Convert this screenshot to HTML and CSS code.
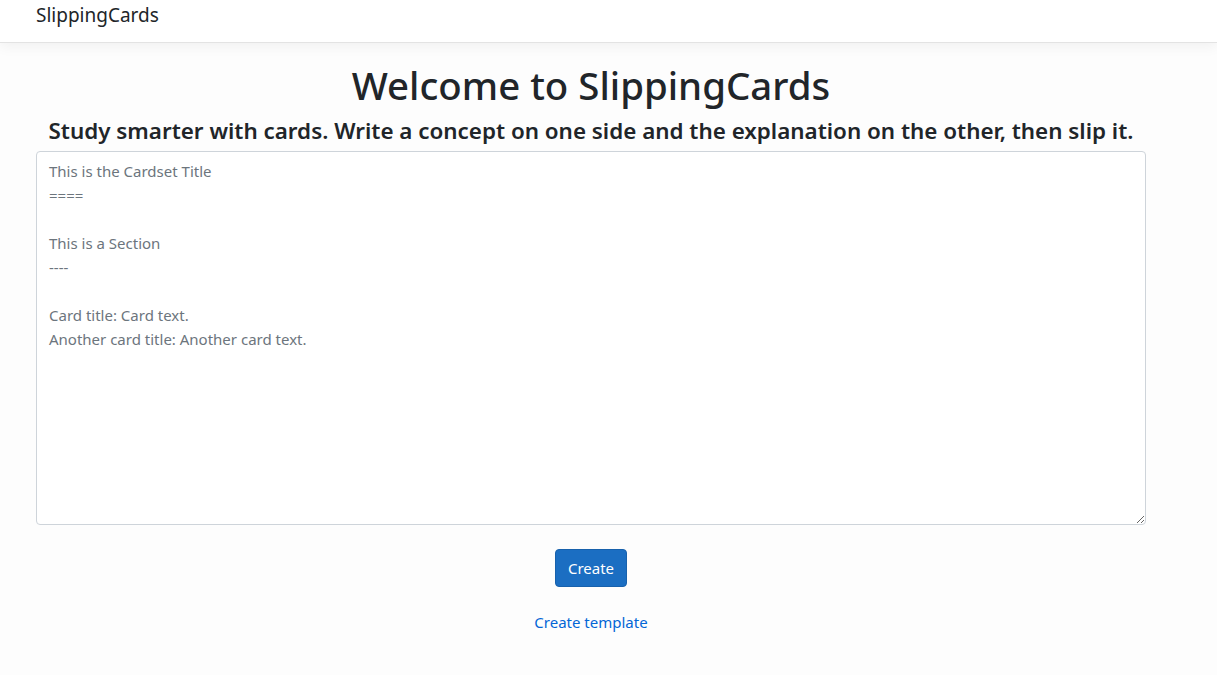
FILE: index.html
```html
<!DOCTYPE html>
<html lang="en">
<head>
<meta charset="utf-8">
<title>SlippingCards</title>
<link rel="stylesheet" href="styles.css">
</head>
<body>
<header class="navbar">
  <a class="brand" href="#">SlippingCards</a>
</header>
<main class="content">
  <h1 class="title">Welcome to SlippingCards</h1>
  <h4 class="subtitle">Study smarter with cards. Write a concept on one side and the explanation on the other, then slip it.</h4>
  <textarea class="editor" placeholder="This is the Cardset Title
====

This is a Section
----

Card title: Card text.
Another card title: Another card text."></textarea>
  <div class="actions">
    <button class="btn-primary" type="button">Create</button>
    <a class="link" href="#">Create template</a>
  </div>
</main>
</body>
</html>
```

FILE: styles.css
```css
* { box-sizing: border-box; }
html, body { margin: 0; padding: 0; }
body {
  font-family: "Noto Sans", "Open Sans", sans-serif;
  font-size: 15px;
  line-height: 1.5;
  color: #212529;
  background: #fdfdfd;
}
.navbar {
  height: 43px;
  background: #fff;
  border-bottom: 1px solid #e3e3e3;
  box-shadow: 0 4px 12px rgba(0,0,0,.05);
  padding: 0 36px;
  display: flex;
  align-items: flex-start;
}
.brand {
  font-size: 19px;
  line-height: 30px;
  color: #212529;
  text-decoration: none;
}
.content {
  width: 1110px;
  margin-left: 36px;
  display: flex;
  flex-direction: column;
  align-items: center;
}
.title {
  margin: 18px 0 0;
  font-size: 38.4px;
  font-weight: 500;
  line-height: 48px;
}
.subtitle {
  margin: 8px 0 6px;
  font-size: 22.4px;
  font-weight: 600;
  line-height: 28px;
  white-space: nowrap;
}
.editor {
  width: 100%;
  height: 374px;
  border: 1px solid #ced4da;
  border-radius: 4px;
  padding: 7px 12px;
  font-family: inherit;
  font-size: 15px;
  line-height: 24px;
  color: #495057;
  background: #fff;
  resize: vertical;
}
.editor::placeholder { color: #6c757d; opacity: 1; }
.actions {
  display: flex;
  flex-direction: column;
  align-items: center;
  margin-top: 24px;
  gap: 24px;
}
.btn-primary {
  font-family: inherit;
  font-size: 15px;
  line-height: 24px;
  padding: 6px 12px;
  height: 38px;
  color: #fff;
  background: #1b6ec2;
  border: 1px solid #1861ac;
  border-radius: 4px;
}
.link {
  color: #0366d6;
  text-decoration: none;
  font-size: 15px;
}
```
